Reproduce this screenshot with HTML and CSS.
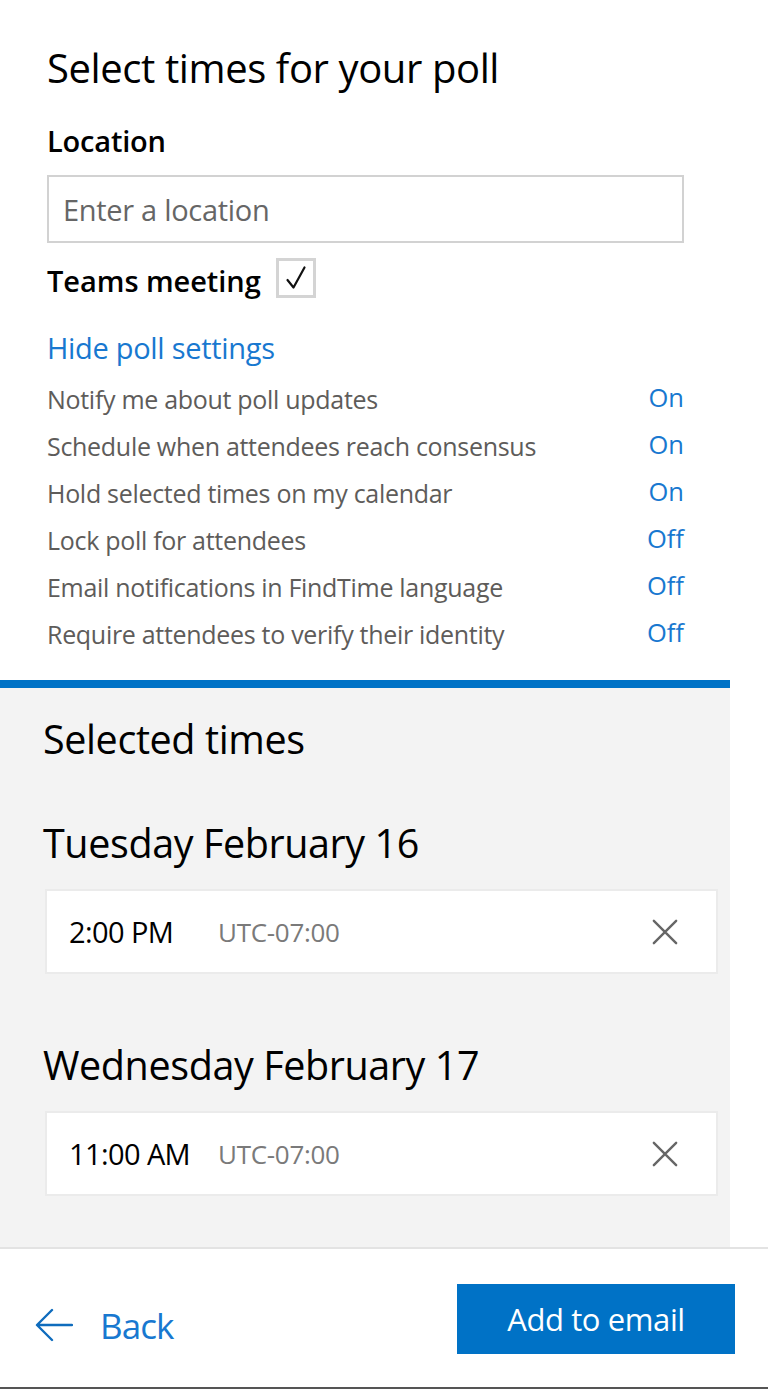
FILE: index.html
```html
<!DOCTYPE html>
<html lang="en">
<head>
<meta charset="utf-8">
<title>Select times for your poll</title>
<link rel="stylesheet" href="styles.css">
</head>
<body>
<div class="page">
  <section class="top">
    <h1 class="title">Select times for your poll</h1>
    <div class="label">Location</div>
    <div class="input">Enter a location</div>
    <div class="teams">
      <span class="teams-text">Teams meeting</span>
      <span class="checkbox">
        <svg width="26" height="28" viewBox="0 0 26 28"><path d="M4.5 16 L10.5 23.5 L21.5 3.5" fill="none" stroke="#111" stroke-width="2.2" stroke-linecap="round" stroke-linejoin="round"/></svg>
      </span>
    </div>
    <div class="link">Hide poll settings</div>
    <ul class="settings">
      <li><span class="name">Notify me about poll updates</span><span class="val">On</span></li>
      <li><span class="name">Schedule when attendees reach consensus</span><span class="val">On</span></li>
      <li><span class="name">Hold selected times on my calendar</span><span class="val">On</span></li>
      <li><span class="name">Lock poll for attendees</span><span class="val">Off</span></li>
      <li><span class="name">Email notifications in FindTime language</span><span class="val">Off</span></li>
      <li><span class="name">Require attendees to verify their identity</span><span class="val">Off</span></li>
    </ul>
  </section>
  <section class="selected">
    <h2 class="sel-title">Selected times</h2>
    <h3 class="day">Tuesday February 16</h3>
    <div class="card">
      <span class="time">2:00 PM</span>
      <span class="tz">UTC-07:00</span>
      <svg class="close" width="28" height="28" viewBox="0 0 28 28"><path d="M2 2 L26 26 M26 2 L2 26" stroke="#666" stroke-width="2.6" stroke-linecap="round"/></svg>
    </div>
    <h3 class="day day2">Wednesday February 17</h3>
    <div class="card">
      <span class="time">11:00 AM</span>
      <span class="tz">UTC-07:00</span>
      <svg class="close" width="28" height="28" viewBox="0 0 28 28"><path d="M2 2 L26 26 M26 2 L2 26" stroke="#666" stroke-width="2.6" stroke-linecap="round"/></svg>
    </div>
  </section>
  <footer class="footer">
    <div class="back">
      <svg width="38" height="34" viewBox="0 0 38 34"><path d="M37 17 H3 M17 2 L2 17 L17 32" fill="none" stroke="#0f6cbd" stroke-width="2.4" stroke-linecap="round" stroke-linejoin="round"/></svg>
      <span class="back-text">Back</span>
    </div>
    <div class="btn">Add to email</div>
  </footer>
</div>
</body>
</html>
```
FILE: styles.css
```css
* { box-sizing: border-box; }
html, body { margin: 0; padding: 0; background: #fff; }
body {
  font-family: "Open Sans", "Noto Sans", "Liberation Sans", sans-serif;
  color: #000;
}
.page {
  width: 768px;
  height: 1389px;
  display: flex;
  flex-direction: column;
  border-bottom: 2px solid #555;
}
.top {
  padding: 44px 84px 0 47px;
  height: 680px;
}
.title {
  margin: 0;
  font-size: 40px;
  font-weight: 400;
  line-height: 48px;
  letter-spacing: -0.4px;
}
.label {
  margin-top: 31px;
  font-size: 29px;
  font-weight: 600;
  line-height: 36px;
  letter-spacing: -0.2px;
}
.input {
  margin-top: 16px;
  height: 68px;
  border: 2px solid #d2d2d2;
  padding: 0 14px;
  display: flex;
  align-items: center;
  font-size: 29px;
  color: #666;
  letter-spacing: -0.3px;
}
.teams {
  margin-top: 15px;
  display: flex;
  align-items: center;
  gap: 15px;
  height: 40px;
}
.teams-text {
  font-size: 29px;
  font-weight: 600;
  letter-spacing: -0.05px;
  margin-top: 4px;
}
.checkbox {
  width: 40px;
  height: 40px;
  border: 3px solid #d4d4d4;
  display: flex;
  align-items: center;
  justify-content: center;
}
.link {
  margin-top: 30px;
  font-size: 29px;
  line-height: 40px;
  color: #1878d0;
  letter-spacing: -0.3px;
}
.settings {
  list-style: none;
  margin: 8px 0 0;
  padding: 0;
}
.settings li {
  display: flex;
  justify-content: space-between;
  align-items: center;
  height: 47px;
  line-height: 47px;
}
.name {
  font-size: 25px;
  color: #5e5c5a;
  letter-spacing: -0.3px;
}
.val {
  font-size: 25.5px;
  color: #1878d0;
  margin-top: -5px;
}
.selected {
  width: 730px;
  height: 567px;
  background: #f3f3f3;
  border-top: 8px solid #0072c6;
  padding: 27px 12px 0 45px;
}
.sel-title, .day {
  margin: 0 0 0 -2px;
  font-size: 39.5px;
  font-weight: 400;
  line-height: 48px;
  letter-spacing: -0.4px;
}
.day { margin-top: 56px; }
.day2 { margin-top: 67px; }
.card {
  margin-top: 22px;
  height: 85px;
  background: #fff;
  border: 2px solid #ebebeb;
  display: flex;
  align-items: center;
  padding: 0 38px 0 22px;
}
.time {
  font-size: 29px;
  letter-spacing: -0.6px;
  min-width: 149px;
}
.tz {
  font-size: 26px;
  color: #7a7a7a;
  letter-spacing: -0.3px;
  flex: 1;
}
.close { width: 26px; height: 26px; }
.footer {
  flex: 1;
  border-top: 2px solid #e3e3e3;
  display: flex;
  align-items: center;
  justify-content: space-between;
  padding: 0 33px 0 35px;
}
.back {
  display: flex;
  align-items: center;
  gap: 27px;
  margin-top: 14px;
}
.back-text {
  font-size: 35px;
  color: #1878d0;
  letter-spacing: -0.9px;
}
.btn {
  width: 278px;
  height: 70px;
  background: #0072c6;
  color: #fff;
  font-size: 31px;
  display: flex;
  align-items: center;
  justify-content: center;
  letter-spacing: -0.4px;
  margin-top: 2px;
}
```
